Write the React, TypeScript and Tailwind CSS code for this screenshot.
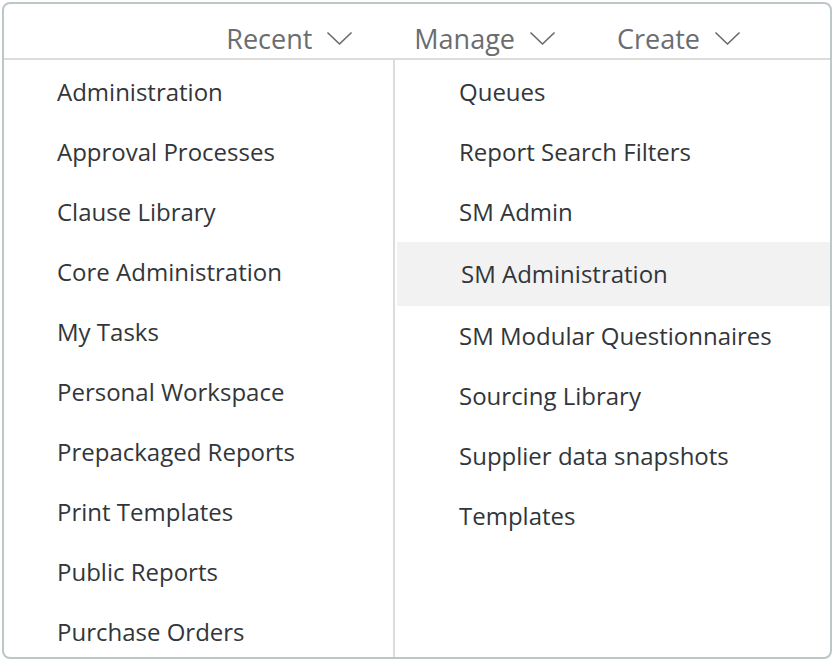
import React, { useState } from 'react';

const leftItems = [
  'Administration',
  'Approval Processes',
  'Clause Library',
  'Core Administration',
  'My Tasks',
  'Personal Workspace',
  'Prepackaged Reports',
  'Print Templates',
  'Public Reports',
  'Purchase Orders',
];

const rightItems = [
  'Queues',
  'Report Search Filters',
  'SM Admin',
  'SM Administration',
  'SM Modular Questionnaires',
  'Sourcing Library',
  'Supplier data snapshots',
  'Templates',
];

const Chevron = () => (
  <svg width="25" height="13" viewBox="0 0 25 13" fill="none" className="shrink-0">
    <path d="M1 1 L12.5 12 L24 1" stroke="#6a6d70" strokeWidth="1.7" strokeLinecap="round" strokeLinejoin="round" />
  </svg>
);

const HeaderTab = ({ label }: { label: string }) => (
  <button className="flex items-center gap-[15px] text-[27px] text-[#6a6d70] leading-none">
    <span>{label}</span>
    <Chevron />
  </button>
);

export default function App() {
  const [active, setActive] = useState('SM Administration');

  return (
    <div className="w-[834px] h-[660px] bg-white p-[2px]" style={{ fontFamily: '"Open Sans", "Noto Sans", sans-serif' }}>
      <div className="h-[657px] w-[830px] border-2 border-[#bcc7c9] rounded-[8px] overflow-hidden flex flex-col">
        {/* top menu */}
        <div className="h-[56px] shrink-0 flex items-center justify-end gap-[62px] pr-[90px] pt-[14px] border-b-2 border-[#dcdcdc]">
          <HeaderTab label="Recent" />
          <HeaderTab label="Manage" />
          <HeaderTab label="Create" />
        </div>

        <div className="flex flex-1 min-h-0">
          <div className="w-[391px] shrink-0 pt-[2px] border-r-2 border-[#dcdcdc]">
            {leftItems.map((item) => (
              <div key={item} className="h-[60px] flex items-center pl-[53px] text-[24px] text-[#32363a]">
                {item}
              </div>
            ))}
          </div>

          <div className="flex-1 pt-[2px]">
            {rightItems.map((item) =>
              item === active ? (
                <div
                  key={item}
                  className="h-[64px] ml-[2px] flex items-center pl-[64px] text-[24px] text-[#32363a] bg-[#f2f2f2]"
                >
                  {item}
                </div>
              ) : (
                <div
                  key={item}
                  onClick={() => setActive(item)}
                  className="h-[60px] flex items-center pl-[64px] text-[24px] text-[#32363a] cursor-pointer"
                >
                  {item}
                </div>
              )
            )}
          </div>
        </div>
      </div>
    </div>
  );
}
